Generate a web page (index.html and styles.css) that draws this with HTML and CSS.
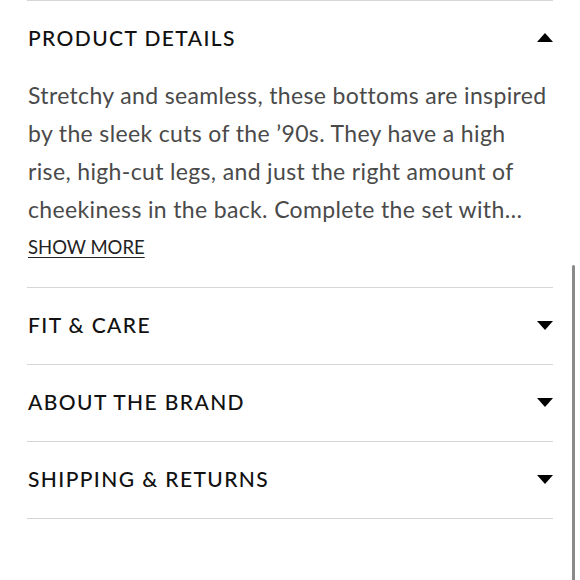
FILE: index.html
```html
<!DOCTYPE html>
<html>
<head>
<meta charset="utf-8">
<link rel="stylesheet" href="styles.css">
</head>
<body>
<div class="page">
  <section class="panel open">
    <div class="panel-head">
      <span class="panel-title">PRODUCT DETAILS</span>
      <span class="caret up"></span>
    </div>
    <div class="panel-body">
      <p class="desc">Stretchy and seamless, these bottoms are inspired<br>by the sleek cuts of the ’90s. They have a high<br>rise, high-cut legs, and just the right amount of<br>cheekiness in the back. Complete the set with…</p>
      <a class="more" href="#">SHOW MORE</a>
    </div>
  </section>
  <section class="panel">
    <div class="panel-head">
      <span class="panel-title">FIT &amp; CARE</span>
      <span class="caret"></span>
    </div>
  </section>
  <section class="panel">
    <div class="panel-head">
      <span class="panel-title">ABOUT THE BRAND</span>
      <span class="caret"></span>
    </div>
  </section>
  <section class="panel">
    <div class="panel-head">
      <span class="panel-title">SHIPPING &amp; RETURNS</span>
      <span class="caret"></span>
    </div>
  </section>
</div>
<div class="scrollbar"></div>
</body>
</html>
```
FILE: styles.css
```css
html, body {
  margin: 0;
  padding: 0;
  background: #fff;
}
body {
  font-family: Lato, "Noto Sans", sans-serif;
  width: 580px;
  height: 580px;
  overflow: hidden;
  position: relative;
}
.page {
  padding: 0 27px;
}
.panel {
  border-top: 1px solid #d6d6d6;
}
.panel:last-child {
  border-bottom: 1px solid #d6d6d6;
}
.panel-head {
  height: 76px;
  box-sizing: border-box;
  padding: 0 0 3px 1px;
  display: flex;
  align-items: center;
  justify-content: space-between;
}
.panel.open .panel-head {
  height: 75px;
}
.panel-title {
  font-size: 21px;
  letter-spacing: 1.4px;
  color: #111;
  font-weight: 500;
}
.caret {
  width: 0;
  height: 0;
  border-left: 8px solid transparent;
  border-right: 8px solid transparent;
  border-top: 9px solid #000;
  margin-top: 2px;
}
.caret.up {
  border-top: 0;
  border-bottom: 9px solid #000;
  margin-top: 0;
}
.panel-body {
  padding: 0 0 28px 1px;
}
.desc {
  margin: 0;
  font-size: 23px;
  letter-spacing: 0.35px;
  line-height: 38px;
  color: #4a4a4a;
  white-space: nowrap;
}
.more {
  display: block;
  margin-top: 7px;
  font-size: 18.5px;
  line-height: 24px;
  color: #222;
  text-decoration: underline;
  text-underline-offset: 3px;
}
.scrollbar {
  position: absolute;
  left: 572px;
  top: 265px;
  width: 3px;
  height: 320px;
  background: #8a8a8a;
  border-radius: 2px;
}
```
